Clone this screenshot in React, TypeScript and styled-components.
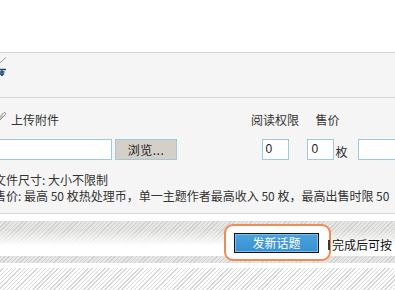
import React from "react";
import styled, { createGlobalStyle } from "styled-components";

const Global = createGlobalStyle`
  html, body { margin: 0; padding: 0; background: #fff; }
  body {
    font-family: "Noto Sans CJK SC", "Noto Sans", sans-serif;
    font-size: 12px;
    color: #333;
    overflow: hidden;
  }
`;

const Page = styled.div`
  width: 395px;
  height: 290px;
  overflow: hidden;
  background: #fff;
`;

const TopArea = styled.div`
  height: 52px;
  background: #fff;
`;

const Toolbar = styled.div`
  background: #f5f5f5;
  border-top: 1px solid #d3d3d3;
  border-bottom: 1px solid #d3d3d3;
  display: flex;
  flex-direction: column;
  gap: 3px;
  padding: 4px 0 0 0;
  box-sizing: border-box;
  height: 46px;
`;

const ToolIcon = styled.svg`
  display: block;
  width: 10px;
  height: 8px;
  margin-left: -3px;
`;

const Form = styled.div`
  background: #f5f5f5;
  border-bottom: 1px solid #d8d8d8;
  padding: 12px 0 9px 0;
  margin-left: -6px;
  width: 520px;
`;

const Grid = styled.div`
  display: grid;
  grid-template-columns: 255px 52px 53px 160px;
  grid-template-rows: 20px 21px;
  row-gap: 9px;
`;

const LabelCell = styled.div<{ $center?: boolean }>`
  display: flex;
  align-items: center;
  justify-content: ${(p) => (p.$center ? "center" : "flex-start")};
  line-height: 20px;
  white-space: nowrap;
  color: #333;
`;

const Clip = styled.svg`
  width: 13px;
  height: 12px;
  margin-right: 4px;
  margin-top: -4px;
`;

const InputCell = styled.div<{ $center?: boolean }>`
  display: flex;
  align-items: center;
  justify-content: ${(p) => (p.$center ? "center" : "flex-start")};
  white-space: nowrap;
`;

const TextBox = styled.div<{ $w: number; $gap?: number }>`
  width: ${(p) => p.$w}px;
  margin-left: ${(p) => p.$gap ?? 0}px;
  height: 21px;
  box-sizing: border-box;
  border: 1px solid #9fc8dd;
  background: #fff;
  font-family: "Liberation Sans", Arial, sans-serif;
  font-size: 12px;
  line-height: 19px;
  padding-left: 3px;
  color: #222;
`;

const Browse = styled.div`
  width: 62px;
  height: 21px;
  box-sizing: border-box;
  margin-left: 3px;
  border: 1px solid #9fc8dd;
  background: #d4d0c8;
  display: flex;
  align-items: center;
  justify-content: center;
  color: #222;
  letter-spacing: 0.5px;
`;

const Unit = styled.span`
  margin-left: 1px;
  color: #333;
  padding-top: 4px;
`;

const Note = styled.div<{ $first?: boolean }>`
  line-height: 16px;
  height: 16px;
  white-space: nowrap;
  margin-top: ${(p) => (p.$first ? "12px" : "0")};
  color: #333;
`;

const Footer = styled.div`
  height: 54px;
  display: flex;
  align-items: flex-start;
  padding: 10px 0 0 224px;
  box-sizing: border-box;
  background:
    linear-gradient(
      to bottom,
      #fff 0 7px,
      rgba(255, 255, 255, 0) 7px,
      rgba(255, 255, 255, 0) 16px,
      #fff 32px,
      #fff 42px,
      rgba(255, 255, 255, 0) 42px,
      rgba(255, 255, 255, 0) 49px,
      #fff 49px
    ),
    repeating-linear-gradient(135deg, #d2d2d0 0 1px, #e6e6e4 1px 3px);
`;

const Halo = styled.div`
  flex-shrink: 0;
  width: 107px;
  height: 37px;
  box-sizing: border-box;
  border: 2px solid #ef8b55;
  border-radius: 9px;
  background: #fff;
  padding: 7px 0 0 8px;
`;

const PostButton = styled.div`
  width: 85px;
  height: 20px;
  box-sizing: border-box;
  border: 1px solid #111;
  background: linear-gradient(to bottom, #4aa2df, #3a90cf);
  box-shadow: inset 0 0 0 1px #7cc0ec;
  color: #fff;
  display: flex;
  align-items: center;
  justify-content: center;
  font-size: 12px;
  line-height: 18px;
`;

const Hint = styled.span`
  flex-shrink: 0;
  margin-left: -3px;
  margin-top: 16px;
  border-left: 2px solid #3a3a3a;
  padding-left: 2px;
  height: 10px;
  line-height: 10px;
  color: #111;
  white-space: nowrap;
  position: relative;
`;

const Stripes = styled.div`
  height: 22px;
  background: repeating-linear-gradient(135deg, #fff 0 2px, #d6d6d6 2px 3px);
`;

export default function App() {
  return (
    <Page>
      <Global />
      <TopArea />
      <Toolbar>
        <ToolIcon viewBox="0 0 10 8">
          <line x1="1" y1="7.5" x2="9" y2="0.5" stroke="#9a9a9a" strokeWidth="1" />
        </ToolIcon>
        <ToolIcon viewBox="0 0 10 8">
          <path d="M1 1.5 H9 M5 1.5 V7.5 M2.5 4 H7.5 M3 5.5 L5 7.5 L7 5.5" stroke="#22446e" strokeWidth="1.3" fill="none" />
        </ToolIcon>
      </Toolbar>
      <Form>
        <Grid>
          <LabelCell>
            <Clip viewBox="0 0 13 12">
              <path
                d="M3 11 L11 3 C12.5 1.5 11 -0.5 9.5 1 L2 8.5 C1 9.5 2 10.5 3 9.5 L9 3.5"
                stroke="#8f8f8f"
                strokeWidth="1"
                fill="none"
              />
            </Clip>
            上传附件
          </LabelCell>
          <LabelCell $center>阅读权限</LabelCell>
          <LabelCell $center>售价</LabelCell>
          <LabelCell />
          <InputCell>
            <TextBox $w={118} />
            <Browse>浏览...</Browse>
          </InputCell>
          <InputCell $center>
            <TextBox $w={27}>0</TextBox>
          </InputCell>
          <InputCell $center>
            <TextBox $w={27}>0</TextBox>
            <Unit>枚</Unit>
          </InputCell>
          <InputCell>
            <TextBox $w={60} $gap={4} />
          </InputCell>
        </Grid>
        <Note $first>文件尺寸: 大小不限制</Note>
        <Note>售价: 最高 50 枚热处理币，单一主题作者最高收入 50 枚，最高出售时限 50</Note>
      </Form>
      <Footer>
        <Halo>
          <PostButton>发新话题</PostButton>
        </Halo>
        <Hint>完成后可按</Hint>
      </Footer>
      <Stripes />
    </Page>
  );
}
